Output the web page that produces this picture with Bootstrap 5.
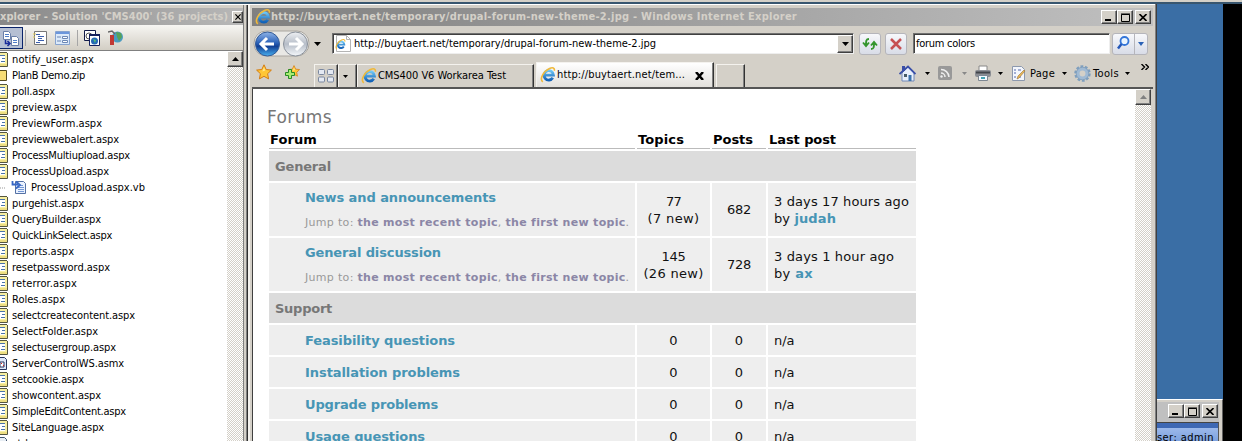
<!DOCTYPE html>
<html lang="en">
<head>
<meta charset="utf-8">
<title>Forums</title>
<link rel="stylesheet" href="https://cdn.jsdelivr.net/npm/bootstrap@5.3.0/dist/css/bootstrap.min.css">
<style>
html,body{height:441px;overflow:hidden}
body{background:#3a6ea5;font:11px/16px "DejaVu Sans Condensed","DejaVu Sans",sans-serif;color:#000;position:relative;width:1242px}
svg{display:block;flex:none}
[data-w]{display:inline-block;white-space:pre}
.desk-edge{position:absolute;left:0;top:0;width:1242px;height:4px;background:linear-gradient(#d4d0c8 2px,#38566f 2px)}
.black-strip{position:absolute;left:1223px;top:4px;width:19px;height:437px;background:#000}
.win{position:absolute;background:#d4d0c8;overflow:hidden}
.dock{left:0;top:4px;width:248px;height:437px;border-top:1px solid #fff}
.dock-in{width:243px;margin-top:3px}
.dock-title{height:17px;background:linear-gradient(90deg,#888,#b8b8b8);color:#d4d0c8;font:bold 11px/15px "DejaVu Sans Condensed",sans-serif}
.wbtn{background:#d4d0c8;border:1px solid;border-color:#fff #404040 #404040 #fff;box-shadow:inset -1px -1px #808080;display:flex;align-items:center;justify-content:center;flex:none}
.dock-tools{height:26px;background:linear-gradient(#f7f6f3,#d2cec4);border-bottom:1px solid #808080;display:grid;grid-template-columns:23px 10px 22px 22px 7px 24px 24px;align-items:center}
.tool-on{background:#b5bfd3;border:1px solid #0a246a;width:23px;height:22px;border-left:0}
.vsep{width:1px;height:16px;background:#a6a6a6}
.tree{width:227px;background:#fff;height:391px;overflow:hidden}
.tree-row{height:16px;display:flex;align-items:center}
.tree-row svg{margin-right:4px}
.tree-row span{padding-top:1px}
.vtrack{width:16px;background:repeating-conic-gradient(#d4d0c8 0 25%,#fff 0 50%) 0 0/2px 2px}
.dock-edge{position:absolute;left:243px;top:0;width:5px;height:437px;background:linear-gradient(90deg,#808080 1px,#d4d0c8 1px 3px,#808080 3px 4px,#303030 4px)}
.ie{left:248px;top:4px;width:909px;height:437px;border-right:1px solid #404040;box-shadow:inset -1px 0 #808080,inset 0 1px #fff,inset 2px 0 #f4f2ee}
.ie-in{margin:4px 3px 0 4px}
.ie-title{height:18px;background:linear-gradient(90deg,#808080,#c0c0c0);color:#d4d0c8;font:bold 11px/18px "DejaVu Sans Condensed",sans-serif;padding:0 2px 0 3px}
.addr-row{height:35px;display:grid;grid-template-columns:80px 522px 5px 22px 4px 22px 6px 197px 2px 36px;align-items:center}
.field{height:21px;background:#fff;border:1px solid;border-color:#707070 #eee #eee #707070;box-shadow:inset 1px 1px #404040;display:flex;align-items:center}
.soft{height:22px;border:1px solid #b5b5bb;border-radius:3px;background:linear-gradient(#f7f8fb,#d8dce7);display:flex;align-items:center;justify-content:center}
.tab-row{height:28px;display:grid;grid-template-columns:31px 31px 24px 19px 177px 2px 178px 2px 29px 154px 26px 38px 35px 34px 62px 66px 10px;border-bottom:2px solid #555}
.tabb{border:1px solid #f4f2ee;border-right:1px solid #333;box-shadow:inset -1px 0 #808080;border-bottom:0;margin-top:3px;display:flex;align-items:center}
.tab-on{background:linear-gradient(#fff,#e2e0dc);margin-top:1px}
.cmd{display:flex;align-items:center;padding-bottom:2px}
.page-view{height:352px;display:flex;margin-right:2px}
.page-in{flex:1;background:#fff;border-left:1px solid #404040;padding:17px 0 0 14px;font:13px/17px "DejaVu Sans",sans-serif}
.forum-h{font-size:17px;line-height:22px;color:#777;height:24px;margin:0;font-weight:400}
.forum-grid{display:grid;grid-template-columns:366px 73px 54px 148px;gap:2px;margin-left:2px;grid-template-rows:19px 30px 53px 53px 30px 30px 30px 30px 30px}
.fh{font-weight:bold;border-bottom:1px solid #bbb;padding-left:1px;line-height:19px;height:19px}
.fg{grid-column:1/5;background:#dcdcdc;color:#777;font-weight:bold;line-height:31px;padding-left:6px;height:30px}
.fc{background:#eee;display:flex;flex-direction:column;justify-content:center;color:#111}
.fc.num{align-items:center}
.fc.last{padding-left:6px}
.fc.name{padding-left:36px}
.fc.two{justify-content:flex-start;padding-top:6px}
.fl{color:#4795b5;font-weight:bold}
.jump{font-size:11px;color:#999;margin-top:8px;height:17px}
.jump b{color:#8b86a6}
.mini{left:1157px;top:399px;width:66px;height:42px;border-top:1px solid #fff;border-right:1px solid #606060}
.mini-title{height:20px;background:#c0c0c0;padding:2px 5px 0 11px;margin:2px 3px 0 0}
.mini-body{background:linear-gradient(#3e68b4 5px,#9cb9eb 5px,#7da2df);height:19px;width:62px;border-right:1px solid #555;border-top:1px solid #444;padding-top:7px}
</style>
</head>
<body>
<svg width="0" height="0" class="position-absolute"><defs>
<linearGradient id="sky" x2="0" y2="1"><stop stop-color="#6ec6f4"/><stop offset="1" stop-color="#1262b8"/></linearGradient>
<linearGradient id="ball" x2="0" y2="1"><stop stop-color="#8fb4e8"/><stop offset=".45" stop-color="#2c62b8"/><stop offset=".6" stop-color="#123f94"/><stop offset="1" stop-color="#48b0f0"/></linearGradient>
<linearGradient id="pale" x2="0" y2="1"><stop stop-color="#eef0f3"/><stop offset=".5" stop-color="#b6bdc8"/><stop offset="1" stop-color="#f5f8fb"/></linearGradient>
<symbol id="ie" viewBox="0 0 16 16"><path d="M12.8 10.8A4.700 4.700 0 1 1 13.500 8.200H5" fill="none" stroke="url(#sky)" stroke-width="2.800"/><path d="M2.800 14.800C-1 12 4 3.800 9.500 1.500c3-1.300 5.500-.8 4.800 2.300" fill="none" stroke="#f0b93a" stroke-width="1.600"/></symbol>
<symbol id="dn" viewBox="0 0 7 4"><path d="M0 0h7L3.500 4z"/></symbol>
<symbol id="x" viewBox="0 0 8 7"><path d="M.5 0l7 7M7.500 0l-7 7" stroke="#000" stroke-width="1.600"/></symbol>
<symbol id="aspx" viewBox="0 0 8 15"><path d="M0 1h7v13H0z" fill="#f7efa0"/><path d="M0 .5h7M7.500 1v13.500H0" fill="none" stroke="#55563f"/><path d="M0 3h5v8H0z" fill="#fff"/><path d="M0 3.500h5M2 6.500h3M1 9.500h4" stroke="#4a74a8"/><path d="M0 13h7" stroke="#e3cc62"/></symbol>
<symbol id="star" viewBox="0 0 16 16"><path d="M8 .8l2.200 4.700 5.200.6-3.800 3.600 1 5.200L8 12.300l-4.600 2.600 1-5.200L.6 6.100l5.200-.6z" fill="#ffc634" stroke="#d47c13"/><path d="M8 3l1.300 3.500-3 1z" fill="#ffe78e"/></symbol>
</defs></svg>

<div class="desk-edge"></div>
<div class="black-strip"></div>

<section class="win dock">
 <div class="dock-in">
  <div class="dock-title d-flex align-items-center justify-content-between"><span data-w="228">xplorer - Solution 'CMS400' (36 projects)</span><span class="wbtn" style="width:11px;height:12px"><svg width="6" height="6"><use href="#x"/></svg></span></div>
  <div class="dock-tools">
   <div class="tool-on d-flex align-items-center"><svg width="20" height="18"><path d="M3.500 2.500h5l2 2v6h-7zM11.500 7.500h5l2 2v7h-7z" fill="#fff" stroke="#6a7fa8"/><path d="M5 5.500h4M5 7.500h4M13 11.500h4M13 13.500h4" stroke="#4f7dc8"/><path d="M5.500 11v3.500H9M7.500 12l2.500 2.500L7.500 17" fill="none" stroke="#1a2c9a" stroke-width="1.500"/></svg></div>
   <span class="vsep" style="margin-left:2px"></span>
   <svg width="15" height="14"><path d="M1.500.5h12v13h-12z" fill="#fff" stroke="#777"/><path d="M3 3.500h4M5 5.500h6M5 7.500h4M5 9.500h6M3 11.500h4" stroke="#3b5fae"/><path d="M0 3h3M0 6h2" stroke="#e5cf5a"/></svg>
   <svg width="15" height="14"><path d="M.5.5h14v13H.5z" fill="#dceafa" stroke="#87a3cf"/><path d="M1 2h13" stroke="#6b96dc" stroke-width="2"/><path d="M2 6h4M2 10h4" stroke="#6c87b4"/><path d="M7.500 5.500h5v2h-5zM7.500 9.500h5v2h-5z" fill="#fff" stroke="#6c87b4"/></svg>
   <span class="vsep"></span>
   <svg width="16" height="16"><path d="M.5.500h11v10H.5z" fill="#fff" stroke="#111a48"/><circle cx="5" cy="6" r="3" fill="none" stroke="#555"/><path d="M5.500 5.500h10v10h-10z" fill="#fff" stroke="#14205c"/><path d="M5 5h11" stroke="#14205c" stroke-width="2"/><circle cx="10.500" cy="11" r="3.500" fill="#2469b5"/><path d="M9 9l3 1-1 3z" fill="#52bd78"/></svg>
   <svg width="16" height="16"><circle cx="9.500" cy="7" r="5.500" fill="#4a9bc0"/><path d="M8 2l5 1 1 4-3 4-2-4z" fill="#57a25a"/><path d="M0 2l4-1 3 3" fill="none" stroke="#666" stroke-width="1.500"/><path d="M4 5v10" stroke="#c03833" stroke-width="4"/></svg>
  </div>
  <div class="d-flex">
   <div class="tree" id="tree"></div>
   <div class="vtrack"><div class="wbtn" style="width:16px;height:16px"><svg width="7" height="4"><path d="M0 4h7L3.500 0z"/></svg></div></div>
  </div>
 </div>
 <div class="dock-edge"></div>
</section>

<section class="win ie">
 <div class="ie-in">
  <div class="ie-title d-flex align-items-center"><svg width="16" height="16"><use href="#ie"/></svg><span data-w="526">http://buytaert.net/temporary/drupal-forum-new-theme-2.jpg - Windows Internet Explorer</span>
   <div class="d-flex ms-auto"><span class="wbtn" style="width:16px;height:14px"><svg width="8" height="8"><path d="M0 7h6" stroke="#000" stroke-width="2"/></svg></span><span class="wbtn" style="width:16px;height:14px"><svg width="9" height="9"><path d="M.5 1.500h8v7h-8zM0 1h9" fill="none" stroke="#000"/></svg></span><span class="wbtn" style="width:16px;height:14px;margin-left:2px"><svg width="8" height="7"><use href="#x"/></svg></span></div></div>

  <div class="addr-row">
   <div class="d-flex align-items-center"><svg width="72" height="30"><rect x="2" y="2" width="55" height="25" rx="12" fill="#e9e8e5" stroke="#aaa6a0"/><circle cx="15.500" cy="15" r="12" fill="url(#ball)" stroke="#345b96"/><path d="M22 15H10M15 9l-6 6 6 6" fill="none" stroke="#fff" stroke-width="3"/><circle cx="43.500" cy="15" r="12" fill="url(#pale)" stroke="#8a919b"/><path d="M37 15h12M44 9l6 6-6 6" fill="none" stroke="#fff" stroke-width="3"/><path d="M62 13h7l-3.500 4z"/></svg></div>
   <div class="field"><svg width="17" height="17" style="margin:0 2px"><path d="M1.500.5h10l4 4v12h-14z" fill="#fff" stroke="#b4b4b4"/><path d="M11.500.5v4h4" fill="none" stroke="#b4b4b4"/><use href="#ie" x="0" y="4" width="11" height="11"/></svg><span data-w="302">http://buytaert.net/temporary/drupal-forum-new-theme-2.jpg</span><span class="wbtn ms-auto" style="width:16px;height:18px"><svg width="7" height="4"><use href="#dn"/></svg></span></div>
   <span></span>
   <div class="soft"><svg width="16" height="16"><path d="M7 3C4 3 4 5 4 9M1 6.500l3 3.500 3-3.500M9 13c3 0 3-2 3-6M9 9.500L12 6l3 3.500" fill="none" stroke="#35962e" stroke-width="1.900"/></svg></div>
   <span></span>
   <div class="soft"><svg width="14" height="14"><path d="M2 2l10 10M12 2L2 12" stroke="#c65053" stroke-width="2.500"/></svg></div>
   <span></span>
   <div class="field"><span data-w="59" style="margin-left:2px">forum colors</span></div>
   <span></span>
   <div class="soft justify-content-start"><svg width="34" height="20"><circle cx="11.500" cy="7" r="4" fill="#eaf5ff" stroke="#3375d8" stroke-width="1.800"/><path d="M8.500 10L5 14.500" stroke="#2457b8" stroke-width="2.500"/><path d="M21.500 0v20" stroke="#b5b5bb"/><path d="M25 8h6l-3 4z" fill="#2b62b6"/></svg></div>
  </div>

  <div class="tab-row">
   <div style="padding:3px 0 0 4px"><svg width="16" height="16"><use href="#star"/></svg></div>
   <div style="padding:3px 0 0 1px"><svg width="17" height="17"><use href="#star" x="4" y="1" width="12" height="12"/><path d="M4.500 5.500h3v3h3v3h-3v3h-3v-3h-3v-3h3z" fill="#a8ec73" stroke="#268b24"/></svg></div>
   <div class="tabb justify-content-center"><svg width="16" height="14"><g fill="#e4e9f3" stroke="#7a879f"><rect x=".5" y=".5" width="6" height="5" rx="1"/><rect x="9.500" y=".5" width="6" height="5" rx="1"/><rect x=".5" y="8" width="6" height="5" rx="1"/><rect x="9.500" y="8" width="6" height="5" rx="1"/></g></svg></div>
   <div class="tabb ps-1"><svg width="5" height="3"><use href="#dn"/></svg></div>
   <div class="tabb"><svg width="16" height="16" style="margin:0 1px 0 3px"><use href="#ie"/></svg><span data-w="128">CMS400 V6 Workarea Test</span></div>
   <span></span>
   <div class="tabb tab-on"><svg width="16" height="16" style="margin:0 1px 0 3px"><use href="#ie"/></svg><span data-w="128">http://buytaert.net/tem...</span><svg width="9" height="8" style="margin:1px 0 0 10px"><path d="M1 0l7 8M8 0L1 8" stroke="#000" stroke-width="2.500"/></svg></div>
   <span></span>
   <div class="tabb"></div>
   <span></span>
   <div class="cmd"><svg width="17" height="17"><path d="M3 8v8h12V8L9 2z" fill="#e8effc" stroke="#7188b8"/><path d="M3 1h3v5H3z" fill="#3a4fa8"/><path d="M.5 9L9 1.500 16.500 9" fill="none" stroke="#3a4fa8" stroke-width="1.800"/><path d="M9.500 10h3v6h-3z" fill="#3c72ac"/><path d="M5 9h3v3H5z" fill="#475a68"/></svg><svg width="5" height="3" class="ms-auto" style="margin-right:-5px"><use href="#dn"/></svg></div>
   <div class="cmd" style="padding-left:13px"><svg width="14" height="14"><rect width="14" height="14" rx="2" fill="#999"/><path d="M3 7a4 4 0 0 1 4 4M3 3.500A8 8 0 0 1 11 11" fill="none" stroke="#eee" stroke-width="1.500"/><circle cx="3.500" cy="10.500" r="1.200" fill="#eee"/></svg><svg width="5" height="3" fill="#888" class="ms-auto" style="margin-right:-4px"><use href="#dn"/></svg></div>
   <div class="cmd" style="padding-left:12px"><svg width="16" height="16"><path d="M4 1h8v6H4z" fill="#fff" stroke="#888"/><rect y="5" width="16" height="7" rx="2" fill="#8b8e94"/><path d="M1 7.500h14" stroke="#41454b" stroke-width="2"/><path d="M3.500 10.500h9v5h-9z" fill="#f4faff" stroke="#7d8792"/><path d="M6 13h4" stroke="#46a4b5" stroke-width="2"/></svg><svg width="5" height="3" class="ms-auto" style="margin-right:-5px"><use href="#dn"/></svg></div>
   <div class="cmd" style="padding-left:12px"><svg width="17" height="17"><path d="M2.500 1.500h9l3 3v11h-12z" fill="#f3f6fc" stroke="#8c98ae"/><path d="M4 5h2M8 5h3M4 8h2M4 12h2M8 12h3" stroke="#5266ab"/><path d="M15 6l-6 7-2 1 1-3 6-6z" fill="#e9b957" stroke="#9b7137" stroke-width=".6"/></svg></div>
   <div class="cmd"><span data-w="25" style="margin-left:-2px;padding-top:2px">Page</span><svg width="5" height="3" style="margin-left:7px"><use href="#dn"/></svg><svg width="17" height="17" style="margin-left:7px" viewBox="0 0 17 17"><circle cx="8.500" cy="8.500" r="7" fill="none" stroke="#7f9fbe" stroke-width="2.500" stroke-dasharray="2.750 1.650"/><circle cx="8.500" cy="8.500" r="4.700" fill="none" stroke="#a0bad4" stroke-width="3.500"/><circle cx="8.500" cy="8.500" r="6.300" fill="none" stroke="#7796b4" stroke-width=".7"/></svg></div>
   <div class="cmd"><span data-w="26" style="margin-left:-1px;padding-top:2px">Tools</span><svg width="5" height="3" style="margin-left:6px"><use href="#dn"/></svg><svg width="8" height="6" class="ms-auto" style="margin:0 11px 13px 0"><path d="M.5 0l3 3-3 3M4.500 0l3 3-3 3" fill="none" stroke="#000" stroke-width="1.400"/></svg></div>
   <span></span>
  </div>

  <div class="page-view">
   <main class="page-in">
    <h1 class="forum-h"><span data-w="65">Forums</span></h1>
    <div class="forum-grid">
     <div class="fh"><span data-w="47">Forum</span></div><div class="fh"><span data-w="46">Topics</span></div><div class="fh"><span data-w="40">Posts</span></div><div class="fh"><span data-w="67">Last post</span></div>
     <div class="fg"><span data-w="56">General</span></div>
     <div class="fc name two"><div class="fl"><span data-w="191">News and announcements</span></div><div class="jump"><span data-w="324">Jump to: <b>the most recent topic</b>, <b>the first new topic</b>.</span></div></div>
     <div class="fc num"><span data-w="15">77</span><span data-w="52">(7 new)</span></div><div class="fc num"><span data-w="24">682</span></div><div class="fc last"><div><span data-w="135">3 days 17 hours ago</span></div><div><span data-w="62">by <b class="fl">judah</b></span></div></div>
     <div class="fc name two"><div class="fl"><span data-w="136">General discussion</span></div><div class="jump"><span data-w="324">Jump to: <b>the most recent topic</b>, <b>the first new topic</b>.</span></div></div>
     <div class="fc num"><span data-w="24">145</span><span data-w="60">(26 new)</span></div><div class="fc num"><span data-w="24">728</span></div><div class="fc last"><div><span data-w="120">3 days 1 hour ago</span></div><div><span data-w="39">by <b class="fl">ax</b></span></div></div>
     <div class="fg"><span data-w="57">Support</span></div>
     <div class="fc name"><div class="fl"><span data-w="150">Feasibility questions</span></div></div><div class="fc num">0</div><div class="fc num">0</div><div class="fc last">n/a</div>
     <div class="fc name"><div class="fl"><span data-w="155">Installation problems</span></div></div><div class="fc num">0</div><div class="fc num">0</div><div class="fc last">n/a</div>
     <div class="fc name"><div class="fl"><span data-w="133">Upgrade problems</span></div></div><div class="fc num">0</div><div class="fc num">0</div><div class="fc last">n/a</div>
     <div class="fc name"><div class="fl"><span data-w="120">Usage questions</span></div></div><div class="fc num">0</div><div class="fc num">0</div><div class="fc last">n/a</div>
    </div>
   </main>
   <div class="vtrack"><div class="wbtn" style="width:16px;height:16px"><svg width="7" height="4" fill="#808080"><path d="M0 4h7L3.500 0z"/></svg></div></div>
  </div>
 </div>
</section>

<section class="win mini">
 <div class="mini-title d-flex"><span class="wbtn" style="width:16px;height:14px"><svg width="8" height="8"><path d="M0 7h6" stroke="#000" stroke-width="2"/></svg></span><span class="wbtn" style="width:16px;height:14px"><svg width="9" height="9"><path d="M.5 1.500h8v7h-8zM0 1h9" fill="none" stroke="#000"/></svg></span><span class="wbtn" style="width:16px;height:14px;margin-left:2px"><svg width="8" height="7"><use href="#x"/></svg></span></div>
 <div class="mini-body"><span data-w="57">ser: admin</span></div>
</section>

<script src="https://cdn.jsdelivr.net/npm/bootstrap@5.3.0/dist/js/bootstrap.bundle.min.js"></script>
<script>
// Solution tree: name, label width
const files=[["notify_user.aspx",82],["PlanB Demo.zip",73],["poll.aspx",43],["preview.aspx",65],["PreviewForm.aspx",90],["previewwebalert.aspx",107],["ProcessMultiupload.aspx",118],["ProcessUpload.aspx",97],["ProcessUpload.aspx.vb",114],["purgehist.aspx",72],["QueryBuilder.aspx",89],["QuickLinkSelect.aspx",100],["reports.aspx",62],["resetpassword.aspx",98],["reterror.aspx",65],["Roles.aspx",53],["selectcreatecontent.aspx",123],["SelectFolder.aspx",86],["selectusergroup.aspx",104],["ServerControlWS.asmx",112],["setcookie.aspx",72],["showcontent.aspx",89],["SimpleEditContent.aspx",114],["SiteLanguage.aspx",92],["st.b",20]];
const aspx='<svg width="8" height="15"><use href="#aspx"/></svg>';
const icons={
 "PlanB Demo.zip":'<svg width="8" height="15"><path d="M0 2.500h6.500v10H0" fill="#f6dc75" stroke="#554a1c"/></svg>',
 "ProcessUpload.aspx.vb":'<svg width="27" height="15"><path d="M0 8h1M2 8h1M4 8h1" stroke="#999"/><path d="M15.500 1.500h8l2 2v10h-10z" fill="#eaf2ff" stroke="#5471a5"/><path d="M18 5.500h5M18 7.500h6M18 9.500h6M18 11.500h6" stroke="#7397d5"/><path d="M12.500 1v3.500H18M16 1.500l4 3.500-4 3.500" fill="none" stroke="#3767c5" stroke-width="1.800"/></svg>',
 "ServerControlWS.asmx":'<svg width="8" height="15"><path d="M0 1.500h4.500l2 2v10H0" fill="#dce6f8" stroke="#26335e"/><path d="M0 6h4v5H0z" fill="#fff" stroke="#26335e"/><path d="M1 7h1v1H1zM3 9h1v1H3z" fill="#c22"/></svg>',
 "st.b":'<svg width="8" height="15"><path d="M0 1.500h4.500l2 2v11H0" fill="#e8eef4" stroke="#41546e"/><path d="M0 6h5" stroke="#4a9a5a" stroke-width="2"/></svg>'};
document.getElementById('tree').innerHTML=files.map(([n,w])=>`<div class="tree-row">${icons[n]||aspx}<span data-w="${w}">${n}</span></div>`).join('');
// Track each label to its set width
document.querySelectorAll('[data-w]').forEach(e=>{
 const target=+e.dataset.w,n=e.textContent.length;
 e.style.letterSpacing=(target-e.getBoundingClientRect().width)/n+'px';
});
</script>
</body>
</html>
